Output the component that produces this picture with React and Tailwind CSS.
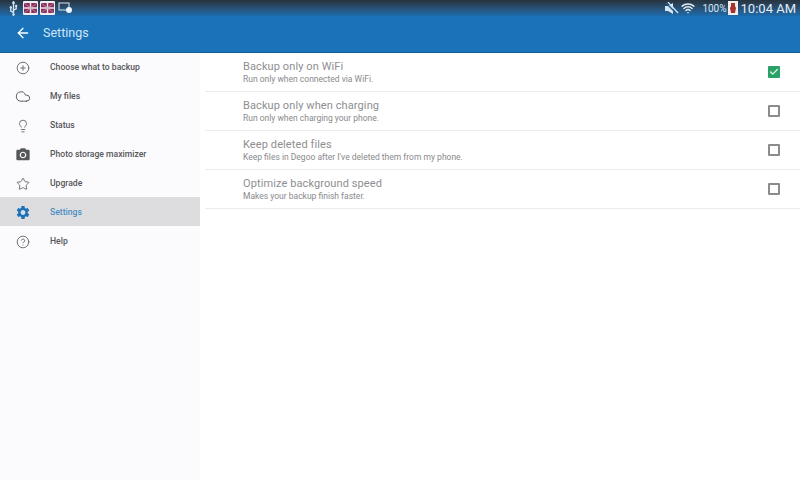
import { ArrowLeft, Cloud, Lightbulb, Star, CircleHelp, CirclePlus, Check, Usb, Wifi } from "lucide-react";
import { MdPhotoCamera, MdSettings } from "react-icons/md";

const menu = [
  { label: "Choose what to backup", icon: CirclePlus, size: 14, stroke: 1.4 },
  { label: "My files", icon: Cloud, size: 17, stroke: 1.4 },
  { label: "Status", icon: Lightbulb, size: 14, stroke: 1.4 },
  { label: "Photo storage maximizer", icon: MdPhotoCamera, size: 16 },
  { label: "Upgrade", icon: Star, size: 14, stroke: 1.4 },
  { label: "Settings", icon: MdSettings, size: 17, active: true },
  { label: "Help", icon: CircleHelp, size: 14, stroke: 1.4 },
];

const options = [
  { title: "Backup only on WiFi", sub: "Run only when connected via WiFi.", checked: true },
  { title: "Backup only when charging", sub: "Run only when charging your phone." },
  { title: "Keep deleted files", sub: "Keep files in Degoo after I've deleted them from my phone." },
  { title: "Optimize background speed", sub: "Makes your backup finish faster." },
];

function FlagIcon() {
  return (
    <svg width="15" height="14" viewBox="0 0 15 14">
      <rect width="15" height="14" rx="1" fill="#f0eef2" />
      <rect x="1" y="2" width="13" height="10" fill="#8a2f5c" />
      <path d="M1 7h13M7.5 2v10" stroke="#f0dfe8" strokeWidth="1.5" />
      <path d="M1 2l13 10M14 2L1 12" stroke="#c9a3b8" strokeWidth="0.7" />
    </svg>
  );
}

function StatusBar() {
  return (
    <div className="flex h-4 items-center justify-between bg-gradient-to-b from-[#28333d] to-[#1a6cae] pl-[7px] pr-[4px] text-white">
      <div className="flex items-center">
        <Usb size={13} strokeWidth={2.5} className="rotate-[-45deg] text-[#d8e6f0]" />
        <span className="ml-[3px]"><FlagIcon /></span>
        <span className="ml-[2px]"><FlagIcon /></span>
        <svg width="15" height="12" viewBox="0 0 15 12" className="ml-[3px]">
          <rect x="1" y="1" width="10" height="7" fill="none" stroke="#d8e6f0" strokeWidth="1" />
          <circle cx="11" cy="8" r="3" fill="#eef4f8" />
        </svg>
      </div>
      <div className="flex items-center">
        {/* muted speaker */}
        <svg width="15" height="13" viewBox="0 0 15 13" className="mr-[2px]">
          <path d="M1 4h3l5-3v11L4 9H1z" fill="#d8e6f0" />
          <path d="M2 1l11 11" stroke="#1d5f96" strokeWidth="1.5" />
          <path d="M4 0l10 11" stroke="#d8e6f0" strokeWidth="1.2" />
        </svg>
        <Wifi size={14} strokeWidth={2.5} className="mr-[7px] text-[#e4eef5]" />
        <span className="font-['Roboto',sans-serif] text-[10px] text-[#d8e6f0]">100%</span>
        <svg width="10" height="14" viewBox="0 0 10 14" className="ml-[1px] mr-[3px]">
          <rect width="10" height="14" fill="#f3eeee" />
          <path d="M3 2h4v3l1 2-1 5H3L2 7l1-2z" fill="#a5342c" />
        </svg>
        <span className="font-['Roboto',sans-serif] text-[13px] leading-none text-[#e4eef5]">10:04 AM</span>
      </div>
    </div>
  );
}

function Toolbar() {
  return (
    <div className="relative z-10 flex h-[37px] items-center bg-[#1a72b8] pb-[3px] pl-[15px] text-[#cfe6f6] shadow-[inset_0_-1px_0_#145e99]">
      <ArrowLeft size={16} strokeWidth={2} className="text-white" />
      <span className="ml-[12px] pt-[1px] font-['Roboto',sans-serif] text-[12.5px]">Settings</span>
    </div>
  );
}

function Sidebar() {
  return (
    <aside className="-mt-[1px] w-[200px] shrink-0 bg-[#fbfafc]">
      {menu.map((item) => {
        const Icon = item.icon;
        return (
          <div
            key={item.label}
            className={`flex h-[29px] items-center pl-[15px] pt-[2px] ${item.active ? "bg-[#dddcde]" : ""}`}
          >
            <span className="flex w-[16px] justify-center">
              <Icon
                size={item.size}
                {...(item.stroke ? { strokeWidth: item.stroke } : {})}
                className={item.active ? "text-[#1a72b8]" : "text-[#55585b]"}
              />
            </span>
            <span
              className={`ml-[19px] font-['Roboto',sans-serif] text-[8.6px] font-medium ${item.active ? "text-[#4b8fc2]" : "text-[#55575a]"}`}
            >
              {item.label}
            </span>
          </div>
        );
      })}
    </aside>
  );
}

function OptionRow({ title, sub, checked }) {
  return (
    <div className="ml-[5px] flex h-[39px] items-center justify-between border-b border-[#eceaee] pl-[38px] pr-[20px]">
      <div className="pt-[1px] font-['Roboto',sans-serif]">
        <div className="text-[11px] leading-[13px] tracking-[0.1px] text-[#8e8e90]">{title}</div>
        <div className="text-[8.5px] leading-[12px] text-[#8a8a8c]">{sub}</div>
      </div>
      {checked ? (
        <span className="flex h-[12px] w-[12px] items-center justify-center rounded-[1px] bg-[#2aa267]">
          <Check size={10} strokeWidth={3} className="text-[#e6f5ec]" />
        </span>
      ) : (
        <span className="h-[12px] w-[12px] rounded-[1px] border-2 border-[#8c8c8e]" />
      )}
    </div>
  );
}

export default function App() {
  return (
    <div className="flex h-[480px] w-[800px] flex-col overflow-hidden bg-white">
      <StatusBar />
      <Toolbar />
      <div className="flex flex-1">
        <Sidebar />
        <main className="flex-1">
          {options.map((o) => (
            <OptionRow key={o.title} {...o} />
          ))}
        </main>
      </div>
    </div>
  );
}
